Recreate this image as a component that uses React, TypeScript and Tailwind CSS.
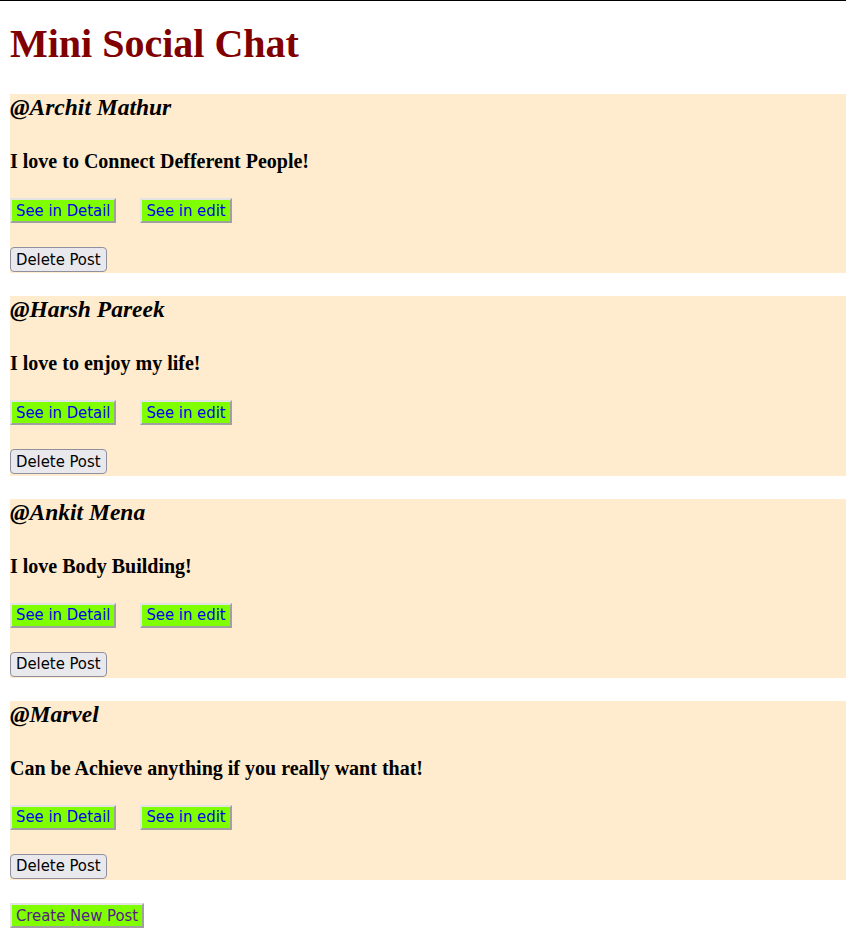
import React from "react";

const posts = [
  { user: "@Archit Mathur", text: "I love to Connect Defferent People!" },
  { user: "@Harsh Pareek", text: "I love to enjoy my life!" },
  { user: "@Ankit Mena", text: "I love Body Building!" },
  { user: "@Marvel", text: "Can be Achieve anything if you really want that!" },
];

const sans = "font-['DejaVu_Sans_Condensed','Noto_Sans',sans-serif]";

function GreenButton({ label, color }: { label: string; color: string }) {
  return (
    <button
      className={`${sans} ${color} h-[25px] px-[4px] text-[16.5px] leading-[20px] bg-[#7fff00] border-2 border-t-[#e3e3e3] border-l-[#e3e3e3] border-r-[#a0a0a0] border-b-[#a0a0a0]`}
    >
      {label}
    </button>
  );
}

export default function App() {
  return (
    <div className="min-h-[940px] bg-white font-['Liberation_Serif',serif]">
      <div className="h-px bg-black" />
      <div className="pl-[10px]">
        <h1 className="mt-[20px] h-[46px] text-[40px] leading-[46px] font-bold text-[#800000]">
          Mini Social Chat
        </h1>
        <div className="mt-[27px] flex flex-col gap-[23px]">
          {posts.map((p) => (
            <div key={p.user} className="bg-[#ffebcd] pt-px pb-[1.33px] flex flex-col items-start">
              <h3 className="h-[25px] text-[23.5px] leading-[25px] font-bold italic text-black whitespace-nowrap">{p.user}</h3>
              <p className="mt-[30px] h-[22px] text-[20px] leading-[22px] font-bold text-black whitespace-nowrap">{p.text}</p>
              <div className="mt-[26px] flex gap-[24px]">
                <GreenButton label="See in Detail" color="text-[#0000ee]" />
                <GreenButton label="See in edit" color="text-[#0000ee]" />
              </div>
              <button
                className={`${sans} mt-[24px] h-[25px] px-[5px] text-[16.5px] leading-[20px] text-black bg-[#e9e9ed] border border-[#8f8f9d] rounded-[4px]`}
              >
                Delete Post
              </button>
            </div>
          ))}
        </div>
        <div className="mt-[23px]">
          <GreenButton label="Create New Post" color="text-[#551a8b]" />
        </div>
      </div>
    </div>
  );
}
